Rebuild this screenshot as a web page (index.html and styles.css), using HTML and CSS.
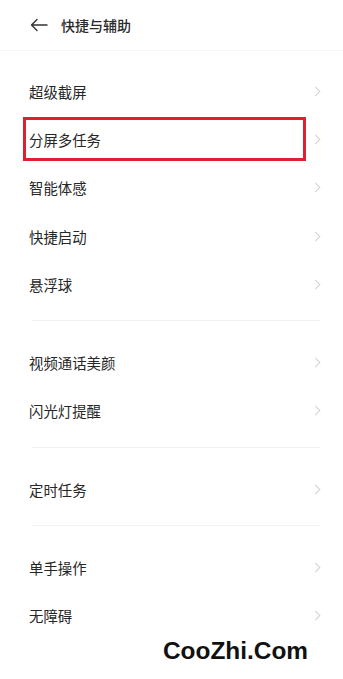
FILE: index.html
```html
<!DOCTYPE html>
<html lang="zh">
<head>
<meta charset="utf-8">
<link rel="stylesheet" href="styles.css">
</head>
<body>
<div class="page">
  <div class="header">
    <svg class="back" width="18" height="14" viewBox="0 0 18 14"><path d="M7 1.5 L1.5 7 L7 12.5 M1.5 7 H17" fill="none" stroke="#333" stroke-width="1.4" stroke-linecap="round" stroke-linejoin="round"/></svg>
    <span class="title">快捷与辅助</span>
  </div>
  <div class="list">
    <div class="row"><span>超级截屏</span><i class="chev"></i></div>
    <div class="row marked"><span>分屏多任务</span><i class="chev"></i><b class="mark"></b></div>
    <div class="row"><span>智能体感</span><i class="chev"></i></div>
    <div class="row"><span>快捷启动</span><i class="chev"></i></div>
    <div class="row"><span>悬浮球</span><i class="chev"></i></div>
    <div class="divider"></div>
    <div class="row"><span>视频通话美颜</span><i class="chev"></i></div>
    <div class="row"><span>闪光灯提醒</span><i class="chev"></i></div>
    <div class="divider"></div>
    <div class="row"><span>定时任务</span><i class="chev"></i></div>
    <div class="divider"></div>
    <div class="row"><span>单手操作</span><i class="chev"></i></div>
    <div class="row"><span>无障碍</span><i class="chev"></i></div>
  </div>
  <div class="watermark">CooZhi.Com</div>
</div>
</body>
</html>
```
FILE: styles.css
```css
html, body {
  margin: 0;
  padding: 0;
  background: #fff;
}
body {
  font-family: "Noto Sans CJK SC", "Noto Sans", sans-serif;
  color: #262626;
}
.page {
  position: relative;
  width: 343px;
  height: 679px;
  overflow: hidden;
}
.header {
  height: 50px;
  display: flex;
  align-items: center;
  padding-left: 30px;
  gap: 13px;
  border-bottom: 1px solid #f5f5f5;
}
.back {
  display: block;
}
.title {
  font-size: 14px;
  font-weight: 500;
  color: #2a2a2a;
}
.list {
  padding-top: 16px;
}
.row {
  position: relative;
  height: 48.3px;
  display: flex;
  align-items: center;
  justify-content: space-between;
  padding: 0 22px 0 29px;
  font-size: 14.4px;
}
.chev {
  width: 6px;
  height: 6px;
  border-top: 1px solid #d2d2d2;
  border-right: 1px solid #d2d2d2;
  transform: rotate(45deg);
  margin-right: 2px;
}
.mark {
  position: absolute;
  left: 23px;
  top: 2px;
  width: 277px;
  height: 38px;
  border: 3px solid #e0202e;
}
.divider {
  height: 1px;
  background: #f2f2f2;
  margin: 12px 23px 17px 32px;
}
.watermark {
  position: absolute;
  left: 163px;
  top: 637px;
  font-family: "Liberation Sans", Arial, sans-serif;
  font-weight: bold;
  font-size: 24.4px;
  color: #111;
  background: #fff;
}
```
